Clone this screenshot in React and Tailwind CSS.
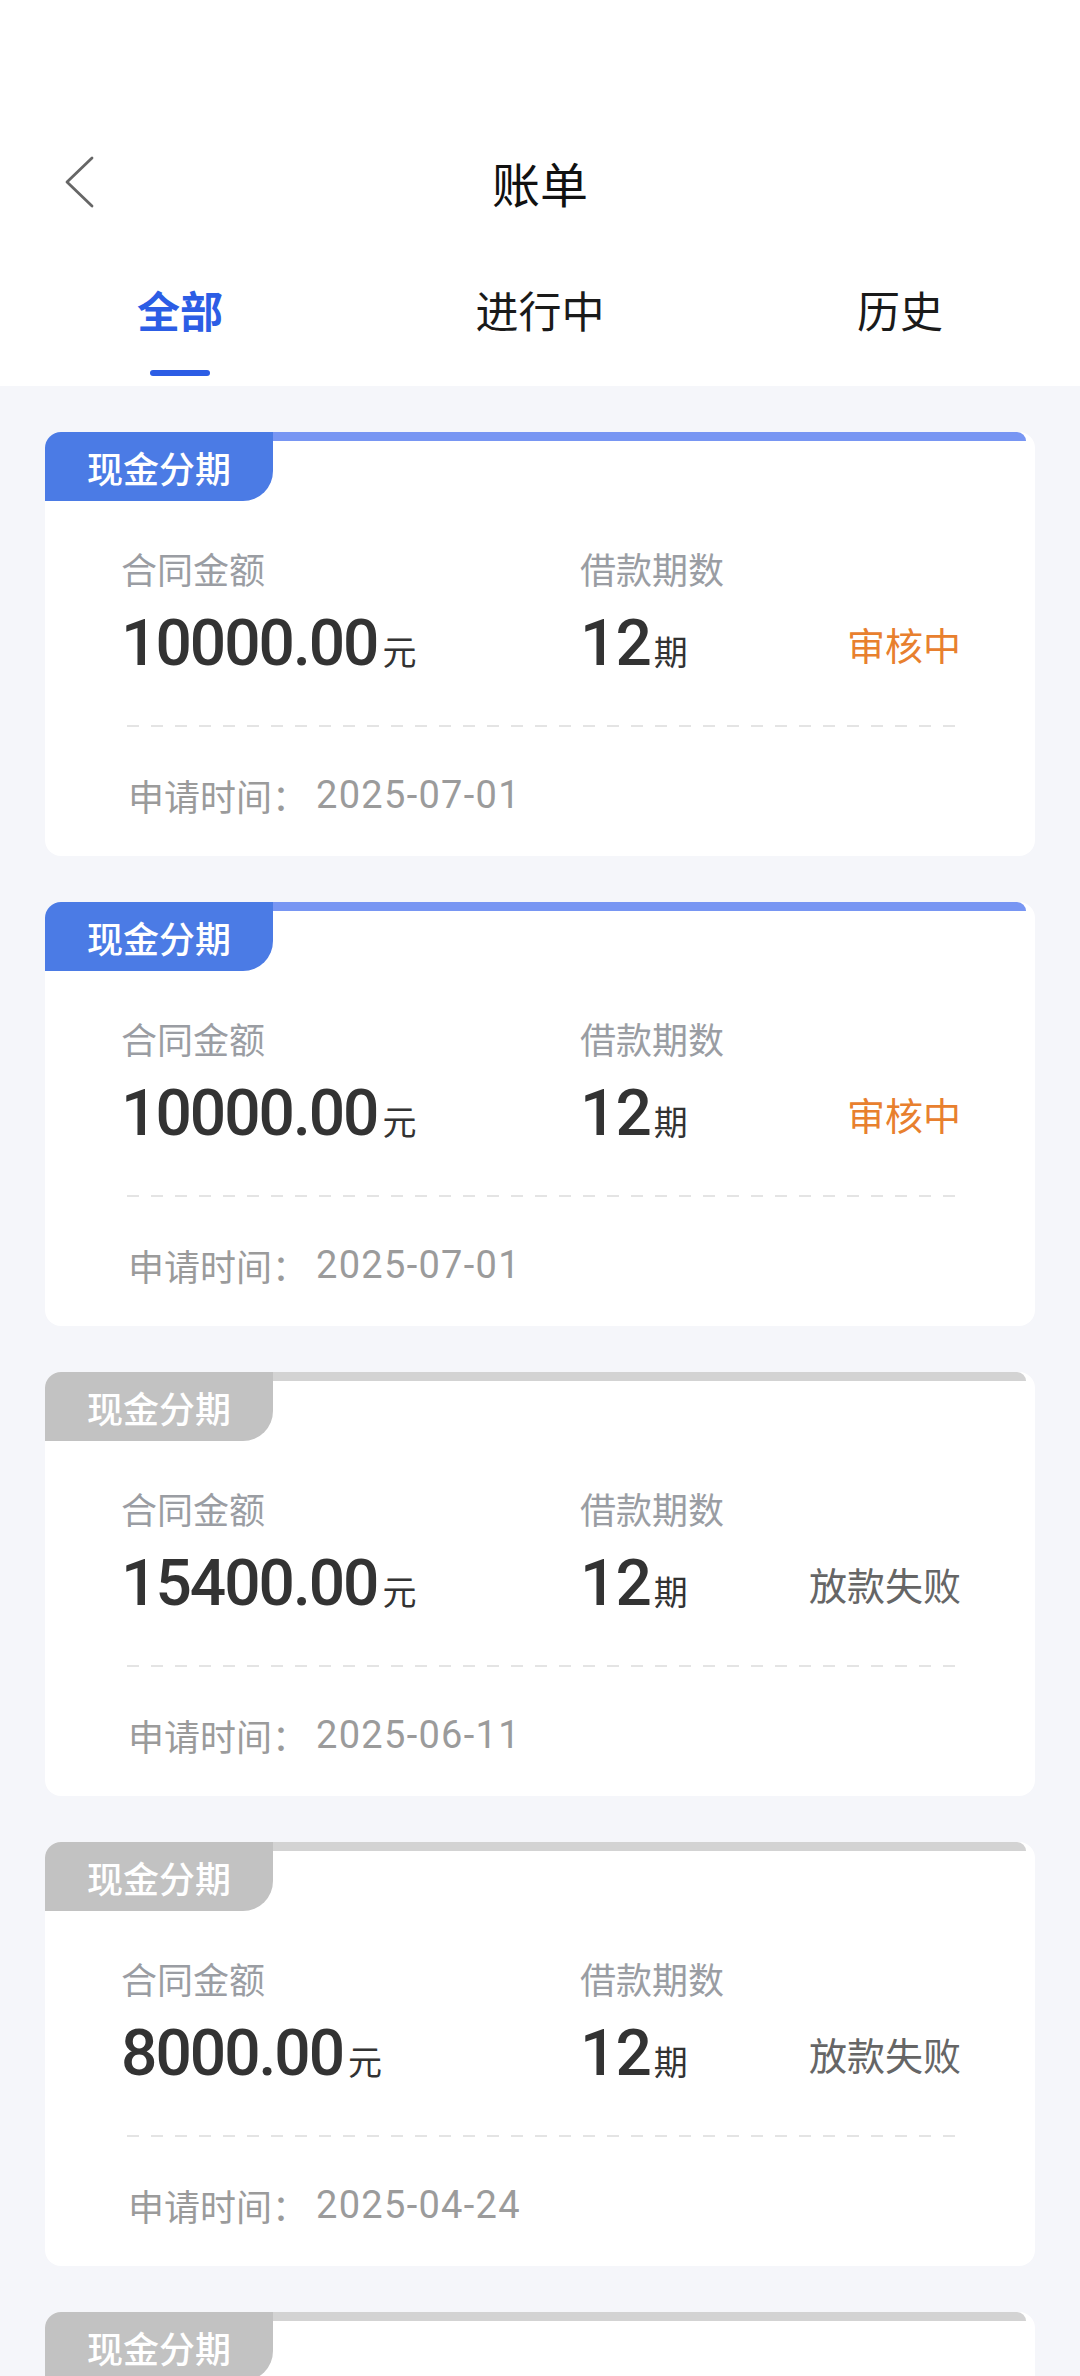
import React, { useState } from 'react';

const cjk = { fontFamily: '"Noto Sans CJK SC", "Noto Sans", sans-serif' };
const num = { fontFamily: 'Roboto, "Noto Sans CJK SC", sans-serif' };

const tabs = ['全部', '进行中', '历史'];

const bills = [
  { active: true, amount: '10000.00', periods: '12', status: '审核中', date: '2025-07-01' },
  { active: true, amount: '10000.00', periods: '12', status: '审核中', date: '2025-07-01' },
  { active: false, amount: '15400.00', periods: '12', status: '放款失败', date: '2025-06-11' },
  { active: false, amount: '8000.00', periods: '12', status: '放款失败', date: '2025-04-24' },
  { active: false, amount: '5000.00', periods: '6', status: '已结清', date: '2025-02-15' },
];

//single bill card
const BillCard = ({ bill }) => (
  <div className="bg-white rounded-[16px]">
    <div className="flex">
      <div
        className={`${bill.active ? 'bg-[#4b7be5]' : 'bg-[#c2c2c2]'} w-[228px] h-[69px] rounded-tl-[16px] rounded-br-[30px] flex items-center justify-center text-white text-[36px] font-medium leading-none`}
        style={cjk}
      >
        现金分期
      </div>
      <div className={`${bill.active ? 'bg-[#7896f3]' : 'bg-[#d3d3d3]'} flex-1 h-[9px] mr-[9px] rounded-tr-[14px]`} />
    </div>

    <div className="pl-[76px] pr-[74px] pt-[45px] pb-[39px]">
      <div className="flex items-end">
        <div className="w-[459px]">
          <div className="text-[36px] leading-[44px] text-[#9a9da3]" style={cjk}>合同金额</div>
          <div className="mt-[22px] h-[64px] flex items-baseline text-[#333333]">
            <span className="text-[64px] leading-[64px] font-medium tracking-[-2px]" style={num}>{bill.amount}</span>
            <span className="text-[34px] ml-[5px]" style={cjk}>元</span>
          </div>
        </div>
        <div className="flex-1">
          <div className="text-[36px] leading-[44px] text-[#9a9da3]" style={cjk}>借款期数</div>
          <div className="mt-[22px] h-[64px] flex items-baseline text-[#333333]">
            <span className="text-[64px] leading-[64px] font-medium tracking-[-1px]" style={num}>{bill.periods}</span>
            <span className="text-[34px] ml-[3px]" style={cjk}>期</span>
          </div>
        </div>
        <div
          className={`${bill.active ? 'text-[#e8802e]' : 'text-[#666666]'} text-[38px] leading-[64px]`}
          style={cjk}
        >
          {bill.status}
        </div>
      </div>

      <div className="mt-[49px] mx-[6px] h-[2px] bg-[repeating-linear-gradient(to_right,#e4e4e4_0,#e4e4e4_12px,transparent_12px,transparent_24px)]" />

      <div className="mt-[46px] ml-[7px] h-[44px] flex items-center text-[#9b9b9b]">
        <span className="text-[36px] leading-[44px]" style={cjk}>申请时间：</span>
        <span className="text-[38px] leading-[44px] ml-[8px] tracking-[1.3px]" style={num}>{bill.date}</span>
      </div>
    </div>
  </div>
);

const App = () => {
  const [activeTab, setActiveTab] = useState(0);

  return (
    <div className="w-[1080px] h-[2376px] overflow-hidden bg-[#f5f6fa]" style={cjk}>
      {/* header */}
      <div className="bg-white pt-[127px]">
        <div className="h-[110px] grid grid-cols-[1fr_auto_1fr] items-center">
          <div className="pl-[62px]">
            <svg width="34" height="54" viewBox="0 0 34 54" fill="none">
              <polyline points="30,3 5,27 30,51" stroke="#666666" strokeWidth="2.8" strokeLinecap="round" strokeLinejoin="round" />
            </svg>
          </div>
          <div className="text-[48px] leading-none text-[#111111]">账单</div>
          <div />
        </div>

        <div className="grid grid-cols-3">
          {tabs.map((tab, i) => (
            <button
              key={tab}
              onClick={() => setActiveTab(i)}
              className="flex flex-col items-center pt-[42px] pb-[10px]"
            >
              <span
                className={`${activeTab === i ? 'text-[#2c5de5] font-bold' : 'text-[#1a1a1a]'} text-[43px] leading-[60px]`}
              >
                {tab}
              </span>
              <span className={`${activeTab === i ? 'bg-[#2c5de5]' : 'bg-transparent'} mt-[31px] w-[60px] h-[6px] rounded-full`} />
            </button>
          ))}
        </div>
      </div>

      {/* bill list */}
      <div className="px-[45px] pt-[46px] flex flex-col gap-[46px]">
        {bills.map((bill, i) => (
          <BillCard key={i} bill={bill} />
        ))}
      </div>
    </div>
  );
};

export default App;
